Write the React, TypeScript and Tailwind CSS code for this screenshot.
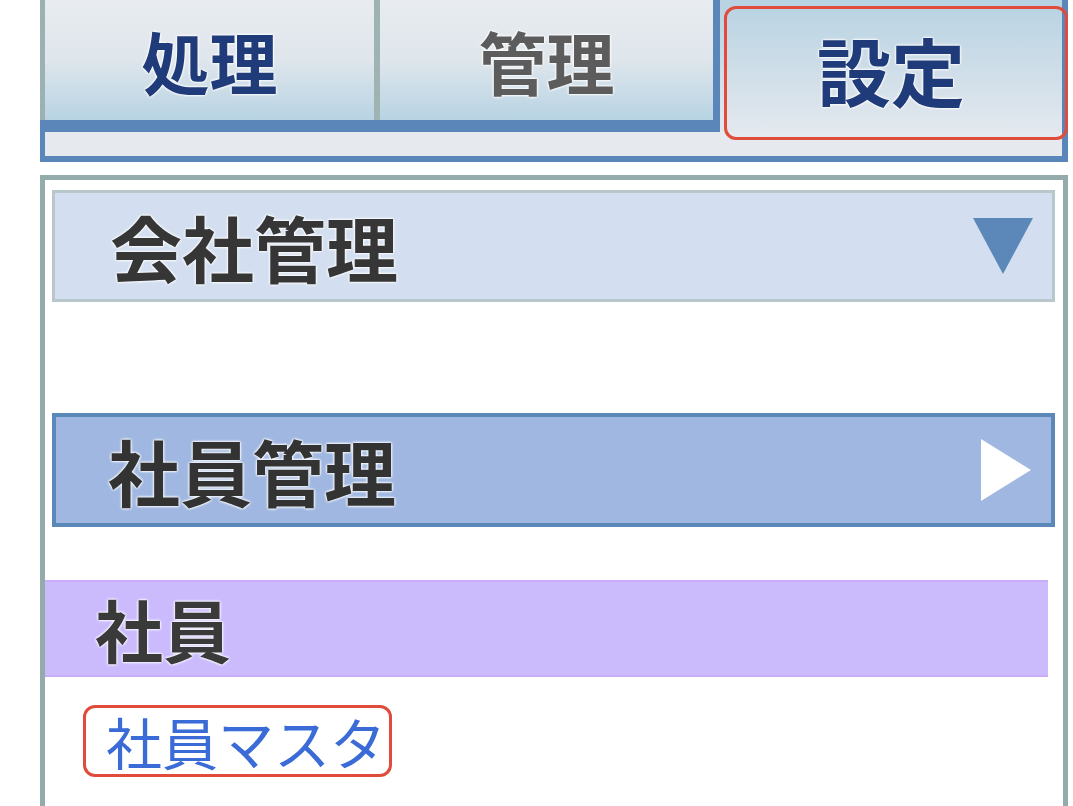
import React from "react";

const glow = "[text-shadow:0_0_3px_#fff,0_0_3px_#fff,0_0_2px_#fff]";

function Triangle({ dir }: { dir: "down" | "right" }) {
  if (dir === "down") {
    return (
      <svg width="64" height="60" viewBox="0 0 64 60" className="shrink-0">
        <polygon points="2,2 62,2 32,58" fill="#5b88b8" />
      </svg>
    );
  }
  return (
    <svg width="54" height="66" viewBox="0 0 54 66" className="shrink-0">
      <polygon points="2,2 52,33 2,64" fill="#ffffff" />
    </svg>
  );
}

export default function App() {
  return (
    <div className="w-[1073px] h-[806px] bg-white overflow-hidden pl-[40px] font-['Noto_Sans_CJK_JP','Noto_Sans_CJK_SC',sans-serif]">
      {/* Tab box */}
      <div className="w-[1028px]">
        <div className="flex h-[132px]">
          <div className="w-[340px] flex flex-col">
            <div className="flex-1 flex items-center justify-center border-l-[5px] border-l-[#9ab2b2] border-r-[6px] border-r-[#9fb3b3] bg-linear-to-b from-[#e8ecf0] via-[#dfe6ec] to-[#b7d3e3]">
              <span className={`text-[68px] leading-none font-bold text-[#1f3b7a] ${glow} mt-[2px]`}>処理</span>
            </div>
            <div className="h-[12px] bg-[#5b86b9]" />
          </div>
          <div className="w-[340px] flex flex-col">
            <div className="flex-1 flex items-center justify-center border-r-[7px] border-r-[#5b86b9] bg-linear-to-b from-[#e8ecf0] via-[#dfe6ec] to-[#b7d3e3]">
              <span className={`text-[68px] leading-none font-bold text-[#5c5c5c] ${glow} mt-[2px]`}>管理</span>
            </div>
            <div className="h-[12px] bg-[#5b86b9]" />
          </div>
          <div className="relative flex-1 flex items-center justify-center border-r-[6px] border-r-[#5b86b9] bg-linear-to-b from-[#b7d2e2] to-[#e3e8ee]">
            <span className={`text-[74px] leading-none font-bold text-[#1f3b7a] ${glow} mt-[6px]`}>設定</span>
            <div className="absolute left-[4px] top-[6px] right-[-6px] bottom-[-8px] border-[3px] border-[#e04b3b] rounded-[12px]" />
          </div>
        </div>
        <div className="h-[30px] bg-[#e6eaee] border-l-[5px] border-r-[6px] border-b-[6px] border-[#5b86b9]" />
      </div>

      {/* Menu panel */}
      <div className="mt-[13px] w-[1028px] h-[640px] border-l-[5px] border-r-[5px] border-t-[5px] border-[#93abab] pt-[10px]">
        <div className="ml-[7px] mr-[8px] h-[112px] border-[3px] border-[#b8c8ca] bg-[#d3dff0] flex items-center justify-between pl-[55px] pr-[17px]">
          <span className={`text-[72px] leading-none font-bold text-[#363636] ${glow}`}>会社管理</span>
          <Triangle dir="down" />
        </div>

        <div className="mt-[111px] ml-[7px] mr-[8px] h-[114px] border-[4px] border-[#5a88b9] bg-[#a0b8e1] flex items-center justify-between pl-[52px] pr-[18px]">
          <span className={`text-[72px] leading-none font-bold text-[#333333] ${glow}`}>社員管理</span>
          <Triangle dir="right" />
        </div>

        <div className="mt-[53px] mr-[15px] h-[97px] bg-[#cbbbfd] border-y-[2px] border-[#c8abf9] flex items-center pl-[50px]">
          <span className={`text-[68px] leading-none font-bold text-[#3a3a3a] ${glow}`}>社員</span>
        </div>

        <div className="mt-[28px] ml-[38px]">
          <div className="inline-flex items-center h-[72px] w-[309px] border-[3px] border-[#e04b3b] rounded-[12px] pl-[20px]">
            <span className="text-[56px] leading-none text-[#3a6bd6]">社員マスタ</span>
          </div>
        </div>
      </div>
    </div>
  );
}
